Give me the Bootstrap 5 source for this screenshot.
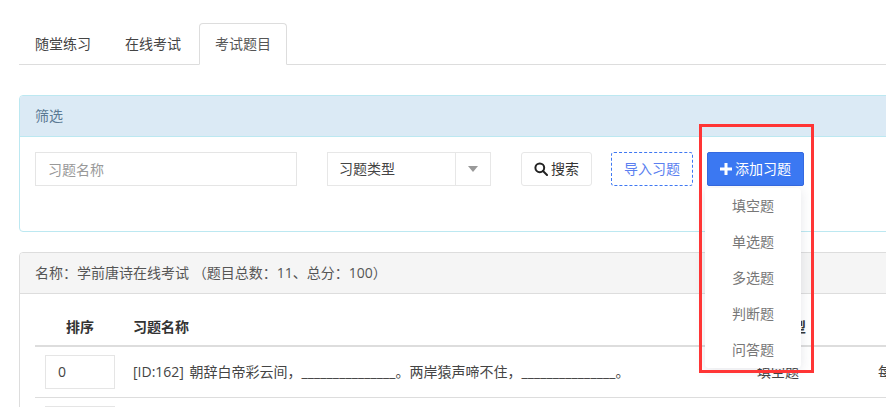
<!DOCTYPE html>
<html lang="zh">
<head>
<meta charset="utf-8">
<link rel="stylesheet" href="https://cdn.jsdelivr.net/npm/bootstrap@5.3.0/dist/css/bootstrap.min.css">
<style>
html,body{height:407px;overflow:hidden}
body{font:14px/20px "Open Sans","Noto Sans CJK SC",sans-serif;color:#333;background:#fff}
.page-wrap{position:relative;width:1200px;padding:23px 0 0 19px}
.tab-bar{border-bottom:1px solid #ddd;height:42px;margin-bottom:30px}
.tab-bar .nav-link{color:#444;height:42px;padding:10px 15px;margin-right:2px;font-size:14px;line-height:20px;border:1px solid transparent;border-radius:4px 4px 0 0}
.tab-bar .nav-link.active{color:#555;background:#fff;border-color:#ddd #ddd #fff}
.pane{border:1px solid #ddd;border-radius:4px;background:#fff}
.pane-info{border-color:#bce8f1;height:137px;margin-bottom:20px}
.pane-head{height:41px;padding:10px 15px;border-bottom:1px solid #ddd;background:#f5f5f5;color:#555;border-radius:3px 3px 0 0}
.pane-info .pane-head{background:#dbeaf5;border-color:#bce8f1;color:#5b7a94}
.filter-row{padding:15px 15px 0;height:49px}
.name-field{width:262px;height:34px;border:1px solid #e5e5e5;padding:6px 12px;color:#333;font-size:14px;border-radius:0;outline:0}
.name-field::placeholder{color:#999}
.type-field{width:164px;height:34px;margin-left:30px;border:1px solid #e7e7e7}
.type-label{flex:1;padding:6px 11px;color:#444}
.type-caret{width:35px;border-left:1px solid #e7e7e7}
.type-caret i{border:5px solid transparent;border-top:6px solid #999;border-bottom:0;display:block}
.search-btn{width:71px;height:34px;margin-left:30px;padding:0;border:1px solid #e7e7e7;border-radius:3px;background:#fff;color:#333;font-size:14px;gap:3px}
.import-btn{width:82px;height:34px;margin-left:19px;padding:0;border:1px dashed #3f78f2;border-radius:3px;background:#fff;color:#5b7ff0;font-size:14px}
.add-btn{width:97px;height:34px;margin-left:14px;padding:0;border:1px solid #3569e0;border-radius:2px;background:#3b78f2;color:#fff;font-size:14px;gap:3px}
.add-menu{position:absolute;left:705px;top:188px;width:96px;height:180px;padding:5px 0;margin:0;list-style:none;background:#fff;border-radius:4px;box-shadow:0 2px 12px rgba(40,50,80,.12);z-index:2}
.add-menu li{height:36px;line-height:25px;text-align:center;color:#777}
.red-frame{position:absolute;left:699px;top:124px;width:115px;height:249px;border:3px solid #ff3535;z-index:3}
.list-area{padding:15px 15px 0}
.q-grid{table-layout:fixed;width:1150px;border-collapse:collapse}
.q-grid th{height:37px;padding:0 8px 8px;border-bottom:2px solid #ddd;font-weight:700;color:#333;vertical-align:bottom}
.q-grid td{height:51px;padding:8px;border-bottom:1px solid #ddd;color:#444;vertical-align:middle}
.q-grid .c1{width:90px;text-align:center}.q-grid .c2{width:561px}.q-grid .c3{width:184px;text-align:center}
.q-grid .c4{text-align:center}
.order-box{display:block;width:70px;height:34px;margin:0 auto;border:1px solid #e5e5e5;padding:6px 12px;color:#444;text-align:left}
.q-id{margin-right:2px}
.q-blank{letter-spacing:.13px}
</style>
</head>
<body>
<div class="page-wrap">
  <ul class="nav tab-bar">
    <li class="nav-item"><a class="nav-link" href="#">随堂练习</a></li>
    <li class="nav-item"><a class="nav-link" href="#">在线考试</a></li>
    <li class="nav-item"><a class="nav-link active" href="#">考试题目</a></li>
  </ul>
  <section class="pane pane-info">
    <div class="pane-head">筛选</div>
    <div class="filter-row d-flex align-items-start">
      <input class="name-field" placeholder="习题名称" aria-label="习题名称">
      <div class="type-field d-flex"><span class="type-label">习题类型</span><span class="type-caret d-flex align-items-center justify-content-center"><i></i></span></div>
      <button class="search-btn d-flex align-items-center justify-content-center"><svg width="14" height="14" viewBox="0 0 14 14" fill="none" stroke="#222" stroke-width="2"><circle cx="5.8" cy="5.8" r="4.4"/><path d="M9 9l4 4" stroke-linecap="round"/></svg>搜索</button>
      <button class="import-btn">导入习题</button>
      <button class="add-btn d-flex align-items-center justify-content-center"><svg width="12" height="12" viewBox="0 0 12 12" fill="#fff"><path d="M4.5 0h3v4.500H12v3H7.500V12h-3V7.500H0v-3h4.500z"/></svg>添加习题</button>
    </div>
  </section>
  <section class="pane">
    <div class="pane-head">名称：学前唐诗在线考试 （题目总数：11、总分：100）</div>
    <div class="list-area">
      <table class="q-grid">
        <thead><tr><th class="c1">排序</th><th class="c2">习题名称</th><th class="c3">题目类型</th><th class="c4">分值</th></tr></thead>
        <tbody>
          <tr><td class="c1"><span class="order-box">0</span></td><td><span class="q-id">[ID:162]</span> 朝辞白帝彩云间，<span class="q-blank">_______________</span>。两岸猿声啼不住，<span class="q-blank">_______________</span>。</td><td class="c3">填空题</td><td>每空2分</td></tr>
          <tr><td class="c1"><span class="order-box"></span></td><td></td><td></td><td></td></tr>
        </tbody>
      </table>
    </div>
  </section>
  <ul class="add-menu">
    <li>填空题</li><li>单选题</li><li>多选题</li><li>判断题</li><li>问答题</li>
  </ul>
  <div class="red-frame"></div>
</div>
<script src="https://cdn.jsdelivr.net/npm/bootstrap@5.3.0/dist/js/bootstrap.bundle.min.js"></script>
</body>
</html>
